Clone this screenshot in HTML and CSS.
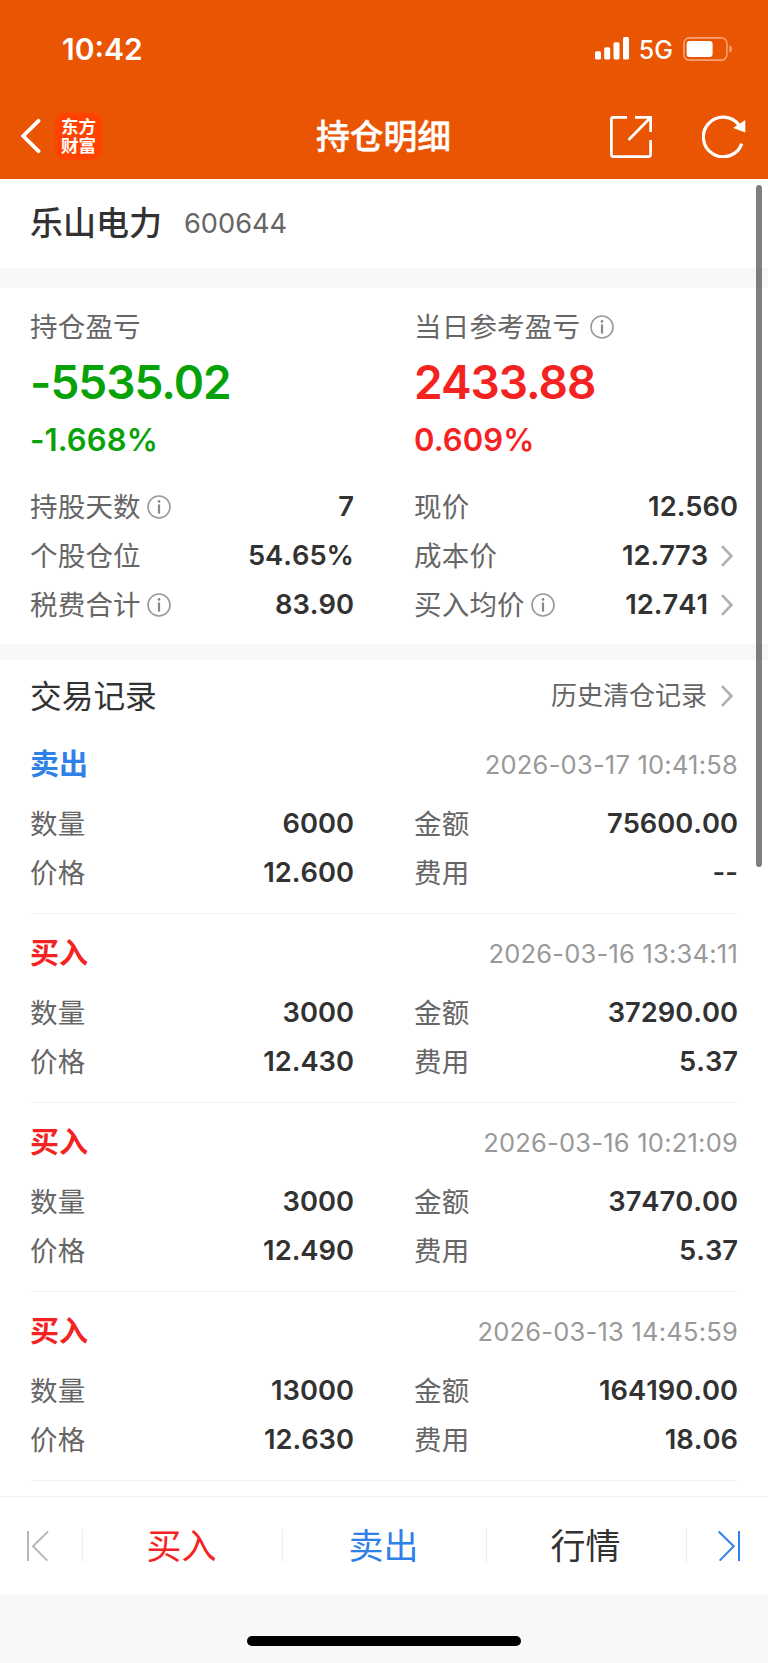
FILE: index.html
```html
<!DOCTYPE html>
<html lang="zh-CN">
<head>
    <meta charset="UTF-8">
    <meta name="viewport" content="width=device-width, initial-scale=1.0">
    <title>持仓明细</title>
    <link rel="stylesheet" href="styles.css">
</head>
<body>

<svg class="defs" width="0" height="0">
    <symbol id="info" viewBox="0 0 24 24">
        <circle cx="12" cy="12" r="11" fill="none" stroke="#999" stroke-width="1.6"/>
        <circle cx="12" cy="6.4" r="1.3" fill="#888"/>
        <path d="M12 9.4V18.6" stroke="#888" stroke-width="2.2" fill="none"/>
    </symbol>
    <symbol id="arrow" viewBox="0 0 12 22">
        <path d="M1 1.2L10.4 11L1 20.8" fill="none" stroke="#b0b0b0" stroke-width="2.6"/>
    </symbol>
</svg>

<header class="header">
    <div class="status-bar">
        <span class="time">10:42</span>
        <div class="status-icons">
            <svg width="34" height="23" viewBox="0 0 34 23" fill="#fff">
                <rect x="0" y="14.3" width="6" height="8.2" rx="1.6"/>
                <rect x="9.2" y="10.3" width="6" height="12.2" rx="1.6"/>
                <rect x="18.5" y="5.2" width="6" height="17.3" rx="1.6"/>
                <rect x="28" y="0" width="6" height="22.5" rx="1.6"/>
            </svg>
            <span class="network">5G</span>
            <svg width="50" height="24" viewBox="0 0 50 24">
                <rect x="0.9" y="0.9" width="43" height="22.2" rx="5.5" fill="none" stroke="#f6a274" stroke-width="1.6"/>
                <rect x="3.6" y="4" width="26" height="16" rx="3" fill="#fff"/>
                <path d="M46.3 8.3C48 9 49 10.4 49 12S48 15 46.3 15.7Z" fill="#f6a274"/>
            </svg>
        </div>
    </div>
    <div class="nav-bar">
        <div class="nav-left">
            <svg width="20" height="34" viewBox="0 0 20 34">
                <path d="M17.5 1.8L2.2 17L17.5 32.2" fill="none" stroke="#fff" stroke-width="3.8" stroke-linecap="round"/>
            </svg>
            <div class="logo">东方<br>财富</div>
        </div>
        <h1 class="title">持仓明细</h1>
        <div class="nav-right">
            <svg width="42" height="42" viewBox="0 0 42 42" fill="none" stroke="#fff" stroke-width="2.7">
                <path d="M17 1.4H3.4Q1.4 1.4 1.4 3.4V38.6Q1.4 40.6 3.4 40.6H38.6Q40.6 40.6 40.6 38.6V24M25 1.4H40.6V16M40 2L18.5 24"/>
            </svg>
            <svg class="refresh" width="44" height="44" viewBox="0 0 44 44">
                <path d="M39.8 29.6A19.8 19.8 0 1 1 37.2 11.4" fill="none" stroke="#fff" stroke-width="3.2"/>
                <path d="M43.3 6V18.4L31.2 14Z" fill="#fff"/>
            </svg>
        </div>
    </div>
</header>

<div class="stock">
    <span class="stock-name">乐山电力</span>
    <span class="stock-code">600644</span>
</div>

<div class="summary">
    <div class="column">
        <div class="label">持仓盈亏</div>
        <div class="profit green">-5535.02</div>
        <div class="percent green">-1.668%</div>
        <div class="row"><span class="label">持股天数</span><svg class="info"><use href="#info"/></svg><b>7</b></div>
        <div class="row"><span class="label">个股仓位</span><b>54.65%</b></div>
        <div class="row"><span class="label">税费合计</span><svg class="info"><use href="#info"/></svg><b>83.90</b></div>
    </div>
    <div class="column">
        <div class="label">当日参考盈亏<svg class="info info-wide"><use href="#info"/></svg></div>
        <div class="profit red">2433.88</div>
        <div class="percent red">0.609%</div>
        <div class="row"><span class="label">现价</span><b>12.560</b></div>
        <div class="row"><span class="label">成本价</span><b>12.773</b><svg class="arrow"><use href="#arrow"/></svg></div>
        <div class="row"><span class="label">买入均价</span><svg class="info"><use href="#info"/></svg><b>12.741</b><svg class="arrow"><use href="#arrow"/></svg></div>
    </div>
</div>

<div class="records">
    <div class="records-head">
        <h2>交易记录</h2>
        <a class="history"><span>历史清仓记录</span><svg class="arrow"><use href="#arrow"/></svg></a>
    </div>

    <div class="record">
        <div class="record-head"><span class="type blue">卖出</span><span class="date">2026-03-17 10:41:58</span></div>
        <div class="record-grid">
            <div class="row"><span class="label">数量</span><b>6000</b></div>
            <div class="row"><span class="label">金额</span><b>75600.00</b></div>
            <div class="row"><span class="label">价格</span><b>12.600</b></div>
            <div class="row"><span class="label">费用</span><b>--</b></div>
        </div>
    </div>

    <div class="record">
        <div class="record-head"><span class="type red">买入</span><span class="date">2026-03-16 13:34:11</span></div>
        <div class="record-grid">
            <div class="row"><span class="label">数量</span><b>3000</b></div>
            <div class="row"><span class="label">金额</span><b>37290.00</b></div>
            <div class="row"><span class="label">价格</span><b>12.430</b></div>
            <div class="row"><span class="label">费用</span><b>5.37</b></div>
        </div>
    </div>

    <div class="record">
        <div class="record-head"><span class="type red">买入</span><span class="date">2026-03-16 10:21:09</span></div>
        <div class="record-grid">
            <div class="row"><span class="label">数量</span><b>3000</b></div>
            <div class="row"><span class="label">金额</span><b>37470.00</b></div>
            <div class="row"><span class="label">价格</span><b>12.490</b></div>
            <div class="row"><span class="label">费用</span><b>5.37</b></div>
        </div>
    </div>

    <div class="record">
        <div class="record-head"><span class="type red">买入</span><span class="date">2026-03-13 14:45:59</span></div>
        <div class="record-grid">
            <div class="row"><span class="label">数量</span><b>13000</b></div>
            <div class="row"><span class="label">金额</span><b>164190.00</b></div>
            <div class="row"><span class="label">价格</span><b>12.630</b></div>
            <div class="row"><span class="label">费用</span><b>18.06</b></div>
        </div>
    </div>
</div>

<div class="bottom-bar">
    <div class="step step-first">
        <svg width="24" height="32" viewBox="0 0 24 32" fill="none" stroke="#b8b8b8" stroke-width="2">
            <path d="M2 1V31M22 1.5L7 16.2L21.3 30.6"/>
        </svg>
    </div>
    <div class="action red">买入</div>
    <div class="action blue">卖出</div>
    <div class="action">行情</div>
    <div class="step step-last">
        <svg width="24" height="32" viewBox="0 0 24 32" fill="none" stroke="#2f80e7" stroke-width="2">
            <path d="M22 1V31M1.7 1.5L16.7 16.2L2.7 30.6"/>
        </svg>
    </div>
</div>

<div class="home-area"><div class="home-indicator"></div></div>

<div class="scrollbar"></div>

</body>
</html>
```

FILE: styles.css
```css
* {
    box-sizing: border-box;
}
body {
    position: relative;
    margin: 0;
    height: 1663px;
    display: flex;
    flex-direction: column;
    overflow: hidden;
    background: #f7f8fa;
    color: #323232;
    font-family: Inter, "Noto Sans CJK SC", sans-serif;
}
svg {
    display: block;
    flex: none;
}
.defs {
    position: absolute;
}
.red {
    color: #f52222;
}
.green {
    color: #07a207;
}
.blue {
    color: #2f80e7;
}

/* header */
.header {
    height: 179px;
    background: #ea5504;
    color: #fff;
}
.status-bar {
    height: 97px;
    padding: 0 35px 0 62px;
    display: flex;
    justify-content: space-between;
    align-items: center;
}
.time {
    font-size: 30px;
    font-weight: 600;
    line-height: 40px;
}
.status-icons {
    display: flex;
    align-items: center;
}
.network {
    margin: 2px 10px 0 10px;
    font-size: 25px;
    font-weight: 500;
    line-height: 30px;
}
.nav-bar {
    height: 80px;
    padding: 0 22px 0 21px;
    display: grid;
    grid-template-columns: 1fr auto 1fr;
    align-items: center;
}
.nav-left {
    display: flex;
    align-items: center;
    gap: 14px;
    padding-bottom: 2px;
}
.logo {
    width: 47px;
    height: 47px;
    padding-top: 3px;
    border-radius: 10px;
    background: #ff4200;
    font-family: "Noto Sans CJK SC", sans-serif;
    font-size: 17.5px;
    font-weight: 700;
    line-height: 19.5px;
    text-align: center;
}
.title {
    margin: 0;
    font-size: 33.8px;
    font-weight: 500;
    line-height: 48px;
    -webkit-text-stroke: 0.4px #fff;
}
.nav-right {
    display: flex;
    align-items: center;
    justify-content: flex-end;
    gap: 50px;
}
.refresh {
    margin-bottom: 2px;
}

/* stock name */
.stock {
    height: 89px;
    padding: 0 30px 1px;
    display: flex;
    align-items: center;
    background: #fff;
}
.stock-name {
    font-size: 33px;
    font-weight: 500;
    line-height: 48px;
}
.stock-code {
    margin-left: 22px;
    color: #666;
    font-size: 27.2px;
}

/* position summary */
.summary {
    height: 356px;
    margin-top: 20px;
    padding: 17px 30px 0;
    display: grid;
    grid-template-columns: 324px 324px;
    column-gap: 60px;
    background: #fff;
}
.label {
    display: flex;
    align-items: center;
    color: #666;
    font-size: 27.5px;
    line-height: 44px;
    letter-spacing: 0.2px;
}
.profit {
    font-size: 46px;
    font-weight: 600;
    line-height: 66px;
    letter-spacing: -1px;
}
.percent {
    margin-bottom: 17px;
    font-size: 31px;
    font-weight: 600;
    line-height: 50px;
    letter-spacing: 0.1px;
}
.row {
    height: 49px;
    display: flex;
    align-items: center;
}
.row b {
    margin-left: auto;
    font-size: 27.3px;
    font-weight: 600;
    font-kerning: none;
}
.info {
    width: 24px;
    height: 24px;
    margin-left: 6px;
}
.info-wide {
    margin-left: 10px;
}
.arrow {
    width: 12px;
    height: 22px;
    margin: 0 5px 0 13px;
}

/* trade records */
.records {
    height: 836px;
    margin-top: 16px;
    padding: 0 30px;
    background: #fff;
}
.records-head {
    height: 65px;
    padding-top: 7px;
    display: flex;
    justify-content: space-between;
    align-items: center;
}
.records-head h2 {
    margin: 0;
    padding-bottom: 5px;
    font-size: 31.7px;
    font-weight: 400;
}
.history {
    display: flex;
    align-items: center;
    color: #666;
    font-size: 26px;
}
.history span {
    padding: 0 1px 5px 0;
}
.record {
    height: 189px;
    padding-top: 14px;
    border-bottom: 1px solid #f2f2f4;
}
.record-head {
    height: 50px;
    margin-bottom: 10px;
    display: flex;
    justify-content: space-between;
    align-items: center;
}
.type {
    padding-bottom: 4px;
    font-size: 29px;
    font-weight: 700;
}
.date {
    color: #999;
    font-size: 25.5px;
    letter-spacing: 0.22px;
}
.record-grid {
    display: grid;
    grid-template-columns: 324px 324px;
    column-gap: 60px;
}

/* bottom actions */
.bottom-bar {
    height: 99px;
    padding-bottom: 1px;
    display: grid;
    grid-template-columns: 83px 200px 204px 200px 81px;
    align-items: center;
    border-top: 1px solid #f0f0f2;
    background: #fff;
}
.bottom-bar > div {
    height: 33px;
    display: flex;
    align-items: center;
    justify-content: center;
    border-right: 1px solid #ececee;
}
.bottom-bar > .step-last {
    padding-left: 2px;
    border-right: none;
}
.step-first {
    padding-right: 6px;
}
.action {
    padding: 0 2px 5px 0;
    font-size: 35px;
}
.home-area {
    height: 68px;
    padding-top: 41px;
}
.home-indicator {
    width: 274px;
    height: 10px;
    margin: 0 auto;
    border-radius: 5px;
    background: #000;
}

.scrollbar {
    position: absolute;
    top: 185px;
    right: 6px;
    width: 6px;
    height: 682px;
    border-radius: 3px;
    background: rgba(0, 0, 0, 0.5);
}
```
